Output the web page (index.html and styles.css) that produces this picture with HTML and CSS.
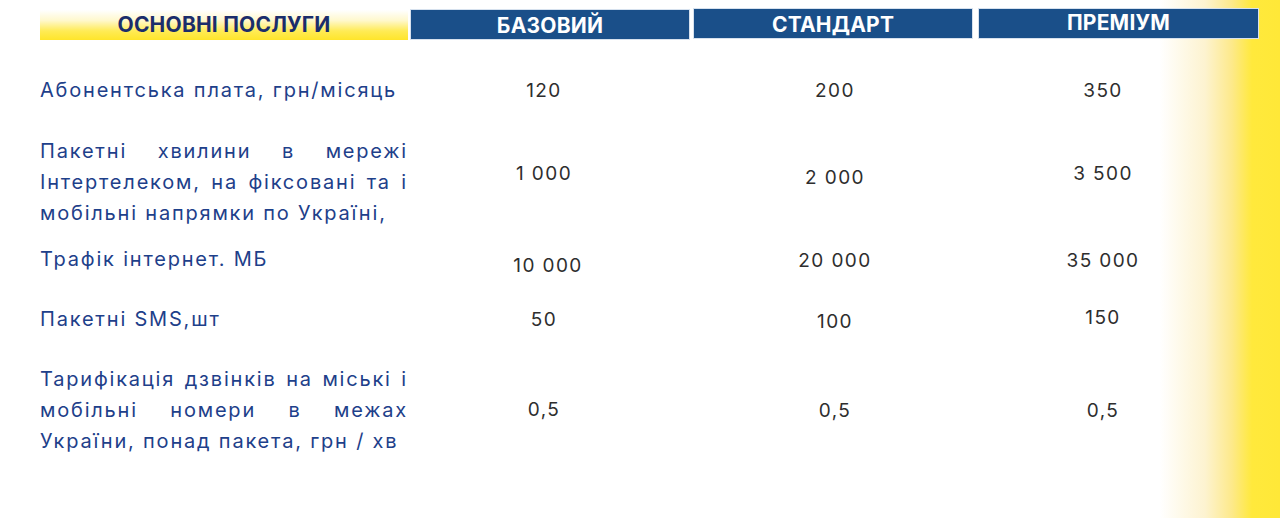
FILE: index.html
```html
<!DOCTYPE html>
<html lang="uk">
<head>
<meta charset="utf-8">
<title>Тарифи</title>
<link rel="stylesheet" href="styles.css">
</head>
<body>
<div class="page">
  <div class="head">
    <div class="h-services">ОСНОВНІ ПОСЛУГИ</div>
    <div class="h-plan h-basic">БАЗОВИЙ</div>
    <div class="h-plan h-std">СТАНДАРТ</div>
    <div class="h-plan h-prem">ПРЕМІУМ</div>
  </div>

  <div class="row r1">
    <div class="label"><span class="ln">Абонентська плата, грн/місяць</span></div>
    <div class="val">120</div>
    <div class="val">200</div>
    <div class="val">350</div>
  </div>

  <div class="row r2">
    <div class="label">
      <span class="ln j">Пакетні хвилини в мережі</span>
      <span class="ln j">Інтертелеком, на фіксовані та і</span>
      <span class="ln">мобільні напрямки по Україні,</span>
    </div>
    <div class="val p22">1 000</div>
    <div class="val p26">2 000</div>
    <div class="val p22">3 500</div>
  </div>

  <div class="row r3">
    <div class="label"><span class="ln">Трафік інтернет. МБ</span></div>
    <div class="val p6 c1">10 000</div>
    <div class="val p1">20 000</div>
    <div class="val p1">35 000</div>
  </div>

  <div class="row r4">
    <div class="label p2"><span class="ln">Пакетні SMS,шт</span></div>
    <div class="val p2">50</div>
    <div class="val p4">100</div>
    <div class="val">150</div>
  </div>

  <div class="row r5">
    <div class="label">
      <span class="ln j">Тарифікація дзвінків на міські і</span>
      <span class="ln j">мобільні номери в межах</span>
      <span class="ln">України, понад пакета, грн / хв</span>
    </div>
    <div class="val p30">0,5</div>
    <div class="val p31">0,5</div>
    <div class="val p31">0,5</div>
  </div>
</div>
</body>
</html>
```

FILE: styles.css
```css
html, body {
  margin: 0;
  padding: 0;
}
body {
  width: 1280px;
  height: 518px;
  overflow: hidden;
  background: linear-gradient(90deg, #ffffff 0, #ffffff 1160px, #fdf3d0 1205px, #fde98a 1232px, #ffe93c 1252px, #ffe838 1280px);
  font-family: Inter, "Noto Sans", sans-serif;
}
.page {
  padding: 8px 0 0 40px;
}
.head {
  display: flex;
  align-items: flex-start;
}
.h-services {
  width: 368px;
  height: 30px;
  margin-top: 2px;
  background: linear-gradient(180deg, #ffffff 0%, #fff8cc 35%, #ffeb55 70%, #ffe52a 100%);
  color: #1b2d6b;
  font-weight: 700;
  font-size: 21px;
  line-height: 29px;
  text-align: center;
  letter-spacing: 0.2px;
}
.h-plan {
  width: 278px;
  height: 29px;
  background: #1a4f89;
  border: 1px solid #d6e1ee;
  color: #ffffff;
  font-weight: 700;
  font-size: 21px;
  line-height: 32px;
  text-align: center;
  letter-spacing: 0.2px;
}
.h-basic {
  margin-left: 2px;
  margin-top: 1px;
}
.h-std {
  margin-left: 3px;
}
.h-prem {
  margin-left: 5px;
  width: 279px;
  line-height: 28px;
}
.row {
  display: grid;
  grid-template-columns: 368px 272px 310px 226px;
  align-items: start;
}
.r1 { margin-top: 35px; }
.r2 { margin-top: 30px; }
.r3 { margin-top: 15px; }
.r4 { margin-top: 21px; }
.r5 { margin-top: 27px; }
.label {
  color: #1e408a;
  font-size: 20px;
  line-height: 31px;
  letter-spacing: 1.8px;
}
.ln {
  display: block;
  white-space: nowrap;
}
.ln.j {
  text-align: justify;
  text-align-last: justify;
}
.val {
  color: #2e2e2e;
  font-size: 19px;
  line-height: 31px;
  letter-spacing: 1.4px;
  text-align: center;
}
.c1 { padding-left: 8px; }
.p1 { padding-top: 1px; }
.p2 { padding-top: 2px; }
.p4 { padding-top: 4px; }
.p6 { padding-top: 6px; }
.p22 { padding-top: 22px; }
.p26 { padding-top: 26px; }
.p30 { padding-top: 30px; }
.p31 { padding-top: 31px; }
```
